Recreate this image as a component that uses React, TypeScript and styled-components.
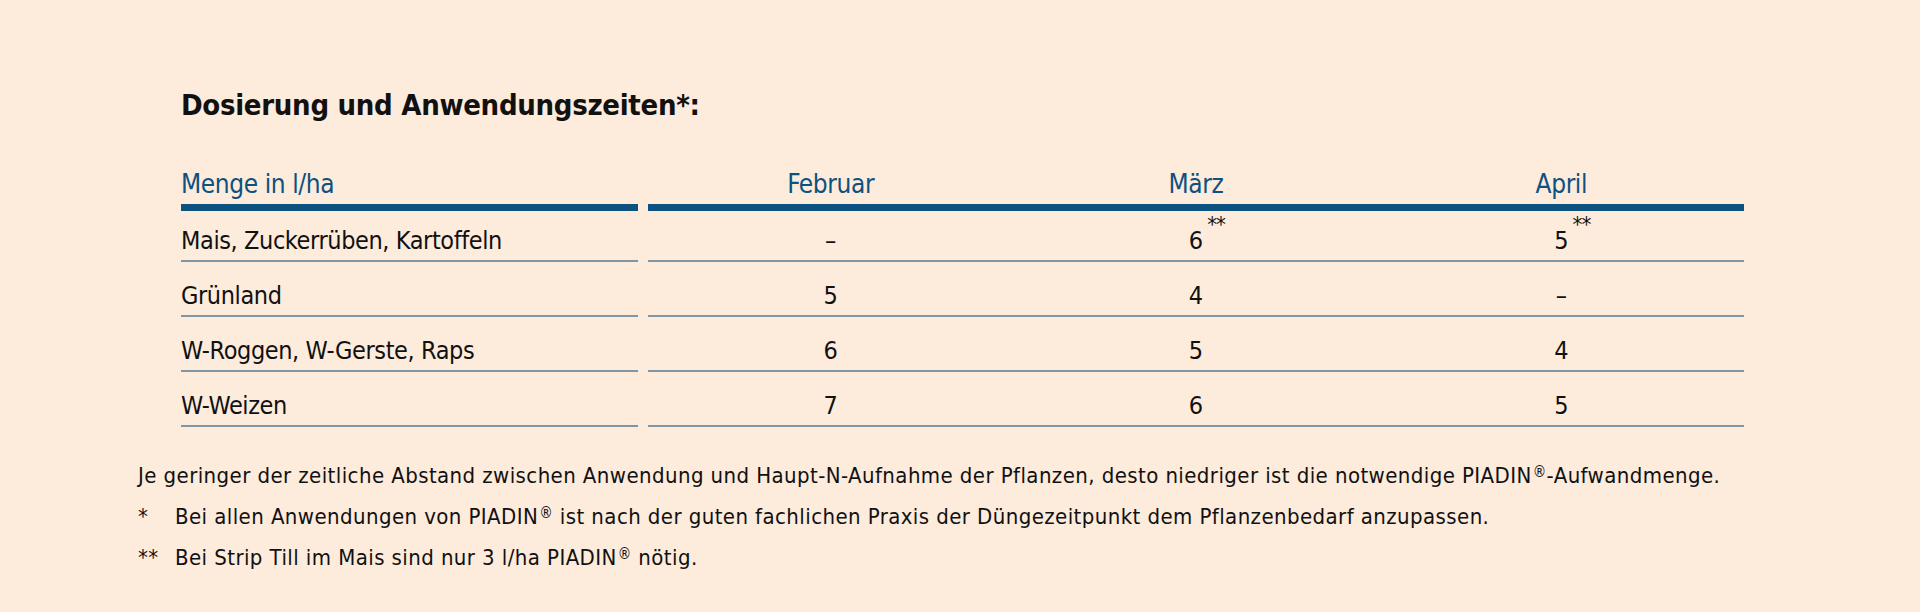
import React from "react";
import styled, { createGlobalStyle } from "styled-components";

const GlobalStyle = createGlobalStyle`
  body {
    margin: 0;
    background: #fdebdc;
    font-family: "Liberation Sans Narrow", "DejaVu Sans", sans-serif;
    font-stretch: condensed;
    color: #111;
  }
`;

const rows = [
  { label: "Mais, Zuckerrüben, Kartoffeln", values: ["–", "6", "5"], marked: [false, true, true] },
  { label: "Grünland", values: ["5", "4", "–"], marked: [false, false, false] },
  { label: "W-Roggen, W-Gerste, Raps", values: ["6", "5", "4"], marked: [false, false, false] },
  { label: "W-Weizen", values: ["7", "6", "5"], marked: [false, false, false] },
];

export default function App() {
  return (
    <Page>
      <GlobalStyle />
      <Section>
        <Title>Dosierung und Anwendungszeiten*:</Title>
        <Table>
          <Row $header>
            <LabelCell $header>Menge in l/ha</LabelCell>
            <ValueGroup $header>
              <ValueCell $header>Februar</ValueCell>
              <ValueCell $header>März</ValueCell>
              <ValueCell $header>April</ValueCell>
            </ValueGroup>
          </Row>
          {rows.map((r) => (
            <Row key={r.label}>
              <LabelCell>{r.label}</LabelCell>
              <ValueGroup>
                {r.values.map((v, i) => (
                  <ValueCell key={i}>
                    <Num>
                      {v}
                      {r.marked[i] && <Sup>**</Sup>}
                    </Num>
                  </ValueCell>
                ))}
              </ValueGroup>
            </Row>
          ))}
        </Table>
      </Section>
      <Notes>
        <Note>
          Je geringer der zeitliche Abstand zwischen Anwendung und Haupt-N-Aufnahme der Pflanzen, desto
          niedriger ist die notwendige PIADIN<Reg>®</Reg>-Aufwandmenge.
        </Note>
        <Note>
          <Mark>*</Mark>
          <span>
            Bei allen Anwendungen von PIADIN<Reg>®</Reg> ist nach der guten fachlichen Praxis der
            Düngezeitpunkt dem Pflanzenbedarf anzupassen.
          </span>
        </Note>
        <Note>
          <Mark>**</Mark>
          <span>
            Bei Strip Till im Mais sind nur 3 l/ha PIADIN<Reg>®</Reg> nötig.
          </span>
        </Note>
      </Notes>
    </Page>
  );
}

const Page = styled.div`
  width: 1920px;
  height: 612px;
  padding-top: 88px;
  box-sizing: border-box;
  overflow: hidden;
`;

const Section = styled.div`
  padding-left: 181px;
`;

const Title = styled.h2`
  margin: 0 0 45px;
  font-size: 29px;
  line-height: 34px;
  font-weight: 700;
  letter-spacing: -0.3px;
  color: #111;
`;

const Table = styled.div`
  display: flex;
  flex-direction: column;
  width: 1563px;
`;

const Row = styled.div<{ $header?: boolean }>`
  display: flex;
  gap: 10px;
  height: ${(p) => (p.$header ? "44px" : "55px")};

  &:nth-child(2) {
    height: 51px;
  }
`;

const LabelCell = styled.div<{ $header?: boolean }>`
  width: 457px;
  box-sizing: border-box;
  display: flex;
  align-items: flex-end;
  font-size: ${(p) => (p.$header ? "26px" : "25px")};
  line-height: 30px;
  letter-spacing: -0.4px;
  color: ${(p) => (p.$header ? "#0d5181" : "#111")};
  padding-bottom: ${(p) => (p.$header ? "5px" : "4px")};
  border-bottom: ${(p) => (p.$header ? "7px solid #0d5181" : "2px solid #7e97a7")};
`;

const ValueGroup = styled.div<{ $header?: boolean }>`
  width: 1096px;
  box-sizing: border-box;
  display: grid;
  grid-template-columns: repeat(3, 1fr);
  align-items: end;
  color: ${(p) => (p.$header ? "#0d5181" : "#111")};
  padding-bottom: ${(p) => (p.$header ? "5px" : "4px")};
  border-bottom: ${(p) => (p.$header ? "7px solid #0d5181" : "2px solid #7e97a7")};
`;

const ValueCell = styled.div<{ $header?: boolean }>`
  text-align: center;
  font-size: ${(p) => (p.$header ? "26px" : "25px")};
  line-height: 30px;
  letter-spacing: ${(p) => (p.$header ? "-0.4px" : "0")};
`;

const Num = styled.span`
  position: relative;
`;

const Sup = styled.span`
  position: absolute;
  left: calc(100% + 4px);
  top: -12px;
  font-size: 22px;
  line-height: 22px;
  letter-spacing: -1px;
`;

const Notes = styled.div`
  margin-top: 28px;
  padding-left: 138px;
`;

const Note = styled.p`
  margin: 0;
  display: flex;
  align-items: baseline;
  height: 41px;
  font-size: 22px;
  line-height: 41px;
  letter-spacing: 0.42px;
  color: #111;
  white-space: pre-wrap;
`;

const Mark = styled.span`
  width: 37px;
  flex-shrink: 0;
`;

const Reg = styled.span`
  font-size: 15px;
  line-height: 0;
  position: relative;
  top: -6px;
  margin-left: 1px;
`;
